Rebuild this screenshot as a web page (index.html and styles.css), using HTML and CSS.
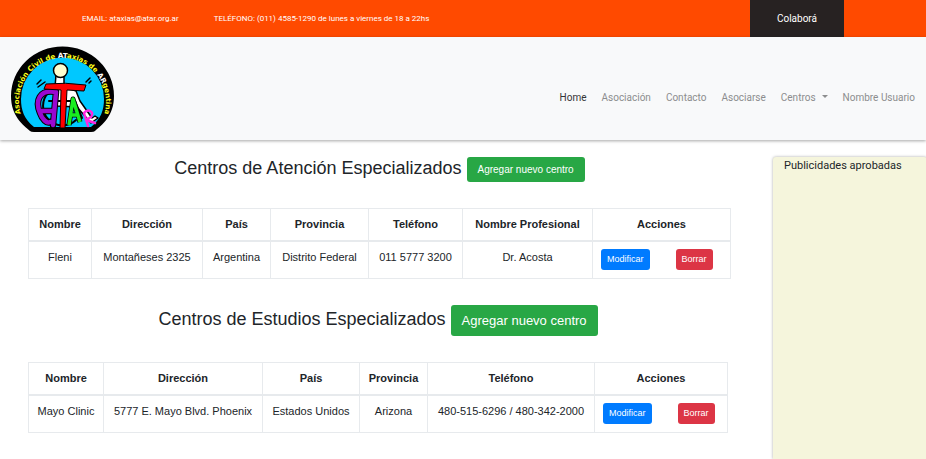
FILE: index.html
```html
<!DOCTYPE html>
<html lang="es">
<head>
<meta charset="utf-8">
<meta name="viewport" content="width=device-width, initial-scale=1">
<title>ATAR - Centros</title>
<link rel="stylesheet" href="styles.css">
</head>
<body>
<div class="topbar">
  <span class="topbar-item">EMAIL: ataxias@atar.org.ar</span>
  <span class="topbar-item">TELÉFONO: (011) 4585-1290 de lunes a viernes de 18 a 22hs</span>
  <a class="donate" href="#">Colaborá</a>
</div>
<header class="header">
  <a class="brand" href="#" aria-label="ATAR">
    <svg class="logo" viewBox="0 0 103 86">
      <defs><path id="ring" d="M10.500 70 A43.500 43.500 0 1 1 92.500 70"/></defs>
      <path fill="#000" d="M19 85 C12 79 0 70 0 50 A51.500 49.500 0 0 1 103 50 C103 70 91 79 84 85 Q83 86 80 86 H23 Q20 86 19 85Z"/>
      <path fill="#00c8ff" d="M23 81 C13 73 10 64 10 53 A41.500 41.500 0 0 1 93 53 C93 64 90 73 80 81Z"/>
      <g stroke="#000" stroke-width="1.500" stroke-linejoin="round" stroke-linecap="round">
        <path fill="#fff" d="M45 29 L44 41 L45 60 L66 61 L80 77 L87 72 L84 70 L81 72 L69 55 L65 45 L57 42 L53 39 L53 29Z"/>
        <ellipse cx="49.500" cy="24.500" rx="7" ry="7" fill="#ffffd0"/>
        <path fill="none" stroke-width="2" d="M38 46 A18 18 0 1 0 65 74 M38 55 H64 L71 72"/>
        <path fill="none" d="M26 38 L30 34 M27 41 L34 36 M75 36 L79 32 M78 37 L80 35"/>
      </g>
      <g fill="none" stroke-linecap="round" stroke-linejoin="round">
        <path stroke="#000" stroke-width="6.500" d="M45 46 C28 43 24 55 29 67 C31 73 36 78 39 76 M45 46 L42 79 M29 65 H43"/>
        <path stroke="#9a08d0" stroke-width="4.500" d="M45 46 C28 43 24 55 29 67 C31 73 36 78 39 76 M45 46 L42 79 M29 65 H43"/>
      </g>
      <path fill="#f00" stroke="#000" stroke-width="1" stroke-linejoin="round" d="M35 38 Q54 36 75 39 L73 45 L56 44 L54 82 L49 82 L50 44 L33 43Z"/>
      <path fill="none" stroke="#000" stroke-width="5" stroke-linejoin="round" d="M58 79 L62 53 L69 76 M60 69 H67"/>
      <path fill="none" stroke="#18ee20" stroke-width="3.500" stroke-linejoin="round" d="M58 79 L62 53 L69 76 M60 69 H67"/>
      <path fill="none" stroke="#ff28df" stroke-width="2.500" stroke-linejoin="round" stroke-linecap="round" d="M77 80 L73 67 C77 62 84 66 80 71 L75 74 L84 77"/>
      <text class="logo-text" fill="#ffff18"><textPath href="#ring" startOffset="50%">Asociación Civil de <tspan fill="#fff">AT</tspan>axias de <tspan fill="#fff">AR</tspan>gentina</textPath></text>
    </svg>
  </a>
  <nav class="nav">
    <a class="nav-link active" href="#">Home</a>
    <a class="nav-link" href="#">Asociación</a>
    <a class="nav-link" href="#">Contacto</a>
    <a class="nav-link" href="#">Asociarse</a>
    <a class="nav-link dropdown" href="#">Centros</a>
    <a class="nav-link" href="#">Nombre Usuario</a>
  </nav>
</header>
<div class="page">
  <main class="content">
    <section class="section">
      <div class="heading">
        <h2 class="title">Centros de Atención Especializados</h2>
        <button class="btn btn-add" type="button">Agregar nuevo centro</button>
      </div>
      <table class="table">
        <colgroup><col class="w63"><col class="w111"><col class="w68"><col class="w98"><col class="w94"><col class="w130"><col class="w138"></colgroup>
        <thead><tr><th>Nombre</th><th>Dirección</th><th>País</th><th>Provincia</th><th>Teléfono</th><th>Nombre Profesional</th><th>Acciones</th></tr></thead>
        <tbody><tr><td>Fleni</td><td>Montañeses 2325</td><td>Argentina</td><td>Distrito Federal</td><td>011 5777 3200</td><td>Dr. Acosta</td>
          <td class="actions-cell"><div class="actions"><button class="btn btn-edit" type="button">Modificar</button><button class="btn btn-delete" type="button">Borrar</button></div></td></tr></tbody>
      </table>
    </section>
    <section class="section section-studies">
      <div class="heading">
        <h2 class="title">Centros de Estudios Especializados</h2>
        <button class="btn btn-add btn-large" type="button">Agregar nuevo centro</button>
      </div>
      <table class="table">
        <colgroup><col class="w75"><col class="w159"><col class="w97"><col class="w68"><col class="w167"><col class="w133"></colgroup>
        <thead><tr><th>Nombre</th><th>Dirección</th><th>País</th><th>Provincia</th><th>Teléfono</th><th>Acciones</th></tr></thead>
        <tbody><tr><td>Mayo Clinic</td><td>5777 E. Mayo Blvd. Phoenix</td><td>Estados Unidos</td><td>Arizona</td><td>480-515-6296 / 480-342-2000</td>
          <td class="actions-cell"><div class="actions"><button class="btn btn-edit" type="button">Modificar</button><button class="btn btn-delete" type="button">Borrar</button></div></td></tr></tbody>
      </table>
    </section>
  </main>
  <aside class="ads">Publicidades aprobadas</aside>
</div>
</body>
</html>
```
FILE: styles.css
```css
* { box-sizing: border-box; }
body {
  margin: 0;
  min-height: 100vh;
  display: flex;
  flex-direction: column;
  background: #fff;
  color: #212529;
  font: 11px/15px "Liberation Sans", Arial, sans-serif;
}
a { color: inherit; text-decoration: none; }

.topbar {
  display: flex;
  align-items: center;
  gap: 35px;
  padding: 0 82px;
  background: #ff4a00;
  color: #fff;
  font: 8px/37px Roboto, sans-serif;
}
.donate {
  margin-left: auto;
  padding: 0 27px;
  background: #272222;
  font-size: 10px;
}

.header {
  position: relative;
  display: flex;
  align-items: center;
  justify-content: space-between;
  padding: 9px 11px 8px;
  background: #f8f9fa;
  box-shadow: 0 1px 3px rgba(0, 0, 0, 0.35);
}
.logo { display: block; width: 103px; height: 86px; }
.logo-text {
  font: bold 7px "DejaVu Sans", sans-serif;
  text-anchor: middle;
}
.nav {
  display: flex;
  gap: 15px;
  margin-top: 17px;
  font-family: Roboto, sans-serif;
  font-size: 10px;
  color: #8c8d8e;
}
.active { color: #343536; }
.dropdown::after {
  content: "";
  display: inline-block;
  margin-left: 6px;
  vertical-align: 3px;
  border: 3px solid transparent;
  border-top-color: currentColor;
  border-bottom: 0;
}

.page {
  flex: 1;
  display: flex;
  gap: 42px;
  padding: 17px 0 0 28px;
}
.content { flex: 1; padding-bottom: 24px; }
.section { margin-bottom: 26px; }
.section-studies { margin-right: 3px; margin-bottom: 0; }
.heading {
  display: flex;
  align-items: center;
  justify-content: center;
  gap: 5px;
  margin-bottom: 26px;
}
.title {
  margin: 0;
  padding-bottom: 4px;
  font-size: 18px;
  font-weight: 400;
  line-height: 20px;
}

.btn {
  border: 0;
  border-radius: 3px;
  color: #fff;
  font-family: inherit;
  font-size: 9px;
  line-height: 21px;
  padding: 0 6px;
}
.btn-add { background: #28a745; padding: 0 11px; font-size: 10px; line-height: 25px; }
.btn-large { font-size: 13px; line-height: 31px; }
.btn-edit { background: #007bff; }
.btn-delete { background: #dc3545; }

.table {
  width: 100%;
  table-layout: fixed;
  border-collapse: collapse;
  text-align: center;
}
.table th, .table td {
  border: 1px solid #e7eaed;
  padding: 8px 0;
  vertical-align: top;
  white-space: nowrap;
}
.table th { border-bottom-width: 2px; }
.table .actions-cell { padding: 7px 8px 8px; }
.actions { display: flex; gap: 26px; }
.w63 { width: 63px; }
.w68 { width: 68px; }
.w75 { width: 75px; }
.w94 { width: 94px; }
.w97 { width: 97px; }
.w98 { width: 98px; }
.w111 { width: 111px; }
.w130 { width: 130px; }
.w133 { width: 133px; }
.w138 { width: 138px; }
.w159 { width: 159px; }
.w167 { width: 167px; }

.ads {
  flex: 0 0 154px;
  padding: 1px 11px;
  background: #f5f5dc;
  border-radius: 3px 3px 0 0;
  box-shadow: 0 0 3px rgba(0, 0, 0, 0.35);
  font-family: Roboto, sans-serif;
}
```
